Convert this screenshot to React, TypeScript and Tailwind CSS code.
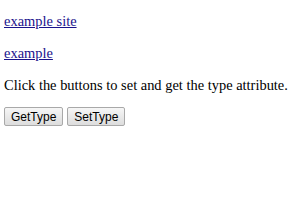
export default function App() {
    return (
        <div className="min-h-[210px] bg-white px-[4px] pt-[1px] font-['Liberation_Serif',serif] text-[14.45px] leading-[17px] text-black">
            <p className="mt-[12px] mb-[15px]">
                <a href="#" className="text-[#1a138c] underline">example site</a>
            </p>
            <p className="my-[15px]">
                <a href="#" className="text-[#1a138c] underline">example</a>
            </p>
            <p className="mt-[14px] mb-[13px] whitespace-nowrap">Click the buttons to set and get the type attribute.</p>
            <div className="flex gap-[4px]">
                <button className="h-[19px] rounded-[2px] border border-[#a9a9a9] bg-gradient-to-b from-[#f6f6f6] to-[#dddddd] px-[6px] font-['Liberation_Sans',sans-serif] text-[12px] leading-none text-black">
                    GetType
                </button>
                <button className="h-[19px] rounded-[2px] border border-[#a9a9a9] bg-gradient-to-b from-[#f6f6f6] to-[#dddddd] px-[6px] font-['Liberation_Sans',sans-serif] text-[12px] leading-none text-black">
                    SetType
                </button>
            </div>
        </div>
    );
}
